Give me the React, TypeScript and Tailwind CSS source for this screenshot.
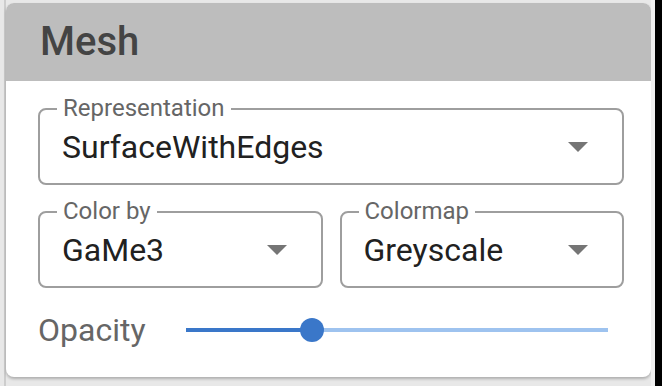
import React from "react";

function Arrow() {
  return (
    <svg width="20" height="10" viewBox="0 0 20 10" className="block">
      <path d="M0 0 L20 0 L10 10 Z" fill="#757575" />
    </svg>
  );
}

function Field({ label, value, h }: { label: string; value: string; h: string }) {
  return (
    <div className={`relative flex items-center border-2 border-[#9e9e9e] rounded-[8px] pl-[22px] ${h}`}>
      <span className="absolute -top-[14px] left-[17px] px-[6px] bg-white text-[24px] leading-[24px] text-[#666666]">
        {label}
      </span>
      <span className="text-[32px] leading-[38px] text-[#212121]">{value}</span>
      <div className="ml-auto mr-[34px]">
        <Arrow />
      </div>
    </div>
  );
}

export default function App() {
  return (
    <div className="w-[662px] h-[386px] bg-[#e8e8e8] flex overflow-hidden font-['Roboto',sans-serif]">
      <div className="w-[4px]" />
      <div className="w-[2px] bg-[#cdcdcd]" />
      <div className="pt-[3px]">
        <div className="w-[645px] h-[374px] bg-white rounded-[8px] overflow-hidden shadow-[0_2px_3px_rgba(0,0,0,0.25)]">
          <div className="h-[78px] bg-[#bdbdbd] pl-[34px] flex items-center">
            <span className="text-[40px] font-medium text-[#444444] leading-none">Mesh</span>
          </div>
          <div className="pl-[32px] pr-[27px] pt-[27px]">
            <Field label="Representation" value="SurfaceWithEdges" h="h-[77px]" />
            <div className="grid grid-cols-2 gap-[17px] mt-[26px]">
              <Field label="Color by" value="GaMe3" h="h-[77px]" />
              <Field label="Colormap" value="Greyscale" h="h-[77px]" />
            </div>
            <div className="flex items-center h-[40px] mt-[22px]">
              <span className="w-[148px] text-[32px] leading-[40px] text-[#666666]">Opacity</span>
              <div className="relative w-[422px] h-[24px]">
                <div className="absolute left-0 right-0 top-[10px] h-[4px] bg-[#9ec3ef]" />
                <div className="absolute left-0 w-[126px] top-[10px] h-[4px] bg-[#3a77c9]" />
                <div className="absolute left-[114px] top-0 w-[24px] h-[24px] rounded-full bg-[#3a77c9]" />
              </div>
            </div>
          </div>
        </div>
      </div>
      <div className="flex-1 bg-[#f0f0f0]" />
      <div className="w-[7px] bg-black" />
    </div>
  );
}
